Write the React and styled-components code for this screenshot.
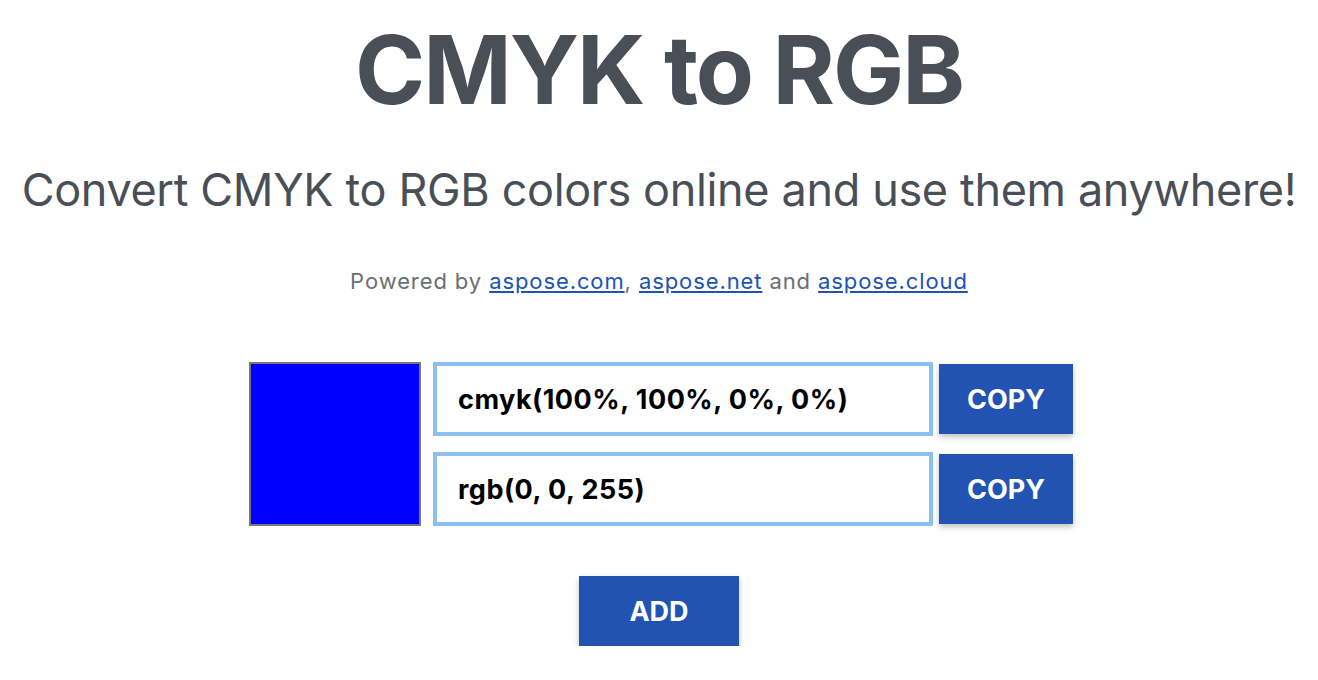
import React from 'react';
import styled, { createGlobalStyle } from 'styled-components';

const GlobalStyle = createGlobalStyle`
  body {
    margin: 0;
    background: #ffffff;
    font-family: Inter, "Noto Sans", sans-serif;
  }
`;

const rows = [
  { id: 'cmyk', value: 'cmyk(100%, 100%, 0%, 0%)' },
  { id: 'rgb', value: 'rgb(0, 0, 255)' }
];

const App = () => {
  return (
    <Page>
      <GlobalStyle />
      <Title>CMYK to RGB</Title>
      <Subtitle>Convert CMYK to RGB colors online and use them anywhere!</Subtitle>
      <Powered>
        Powered by <Link href="#">aspose.com</Link>, <Link href="#">aspose.net</Link> and{' '}
        <Link href="#">aspose.cloud</Link>
      </Powered>
      <Converter>
        <Swatch color="#0000ff" />
        <Fields>
          {rows.map((row) => (
            <Row key={row.id}>
              <ValueInput readOnly value={row.value} />
              <Button width={134}>COPY</Button>
            </Row>
          ))}
        </Fields>
      </Converter>
      <Actions>
        <Button width={160}>ADD</Button>
      </Actions>
    </Page>
  );
};

export default App;

const Page = styled.div`
  display: flex;
  flex-direction: column;
  align-items: center;
  padding-top: 20px;
  color: #4a4f57;
`;

const Title = styled.h1`
  margin: 0;
  font-size: 95px;
  line-height: 100px;
  font-weight: 700;
  letter-spacing: -2px;
`;

const Subtitle = styled.h2`
  margin: 42px 0 0;
  font-size: 45px;
  line-height: 56px;
  font-weight: 400;
  letter-spacing: -0.35px;
  white-space: nowrap;
`;

const Powered = styled.p`
  margin: 48px 0 0;
  font-size: 22px;
  line-height: 30px;
  letter-spacing: 0.9px;
  color: #6b6e73;
`;

const Link = styled.a`
  color: #2153b3;
  text-decoration: underline;
`;

const Converter = styled.div`
  display: flex;
  gap: 12px;
  margin: 66px 0 0 4px;
`;

const Swatch = styled.div`
  width: 168px;
  height: 160px;
  border: 2px solid #777777;
  background: ${(p) => p.color};
`;

const Fields = styled.div`
  display: flex;
  flex-direction: column;
  gap: 16px;
`;

const Row = styled.div`
  display: flex;
  align-items: center;
  gap: 6px;
`;

const ValueInput = styled.input`
  box-sizing: border-box;
  width: 500px;
  height: 74px;
  border: 4px solid #8cc0ee;
  padding: 0 0 0 21px;
  font-family: Inter, "Noto Sans", sans-serif;
  font-size: 27px;
  font-weight: 700;
  letter-spacing: 0.5px;
  color: #000000;
  outline: none;
`;

const Button = styled.button`
  width: ${(p) => p.width}px;
  height: 70px;
  border: none;
  background: #2253b2;
  color: #ffffff;
  font-family: Inter, "Noto Sans", sans-serif;
  font-size: 27px;
  font-weight: 700;
  box-shadow: 0 3px 6px rgba(0, 0, 0, 0.25);
  cursor: pointer;
`;

const Actions = styled.div`
  margin-top: 50px;
`;
